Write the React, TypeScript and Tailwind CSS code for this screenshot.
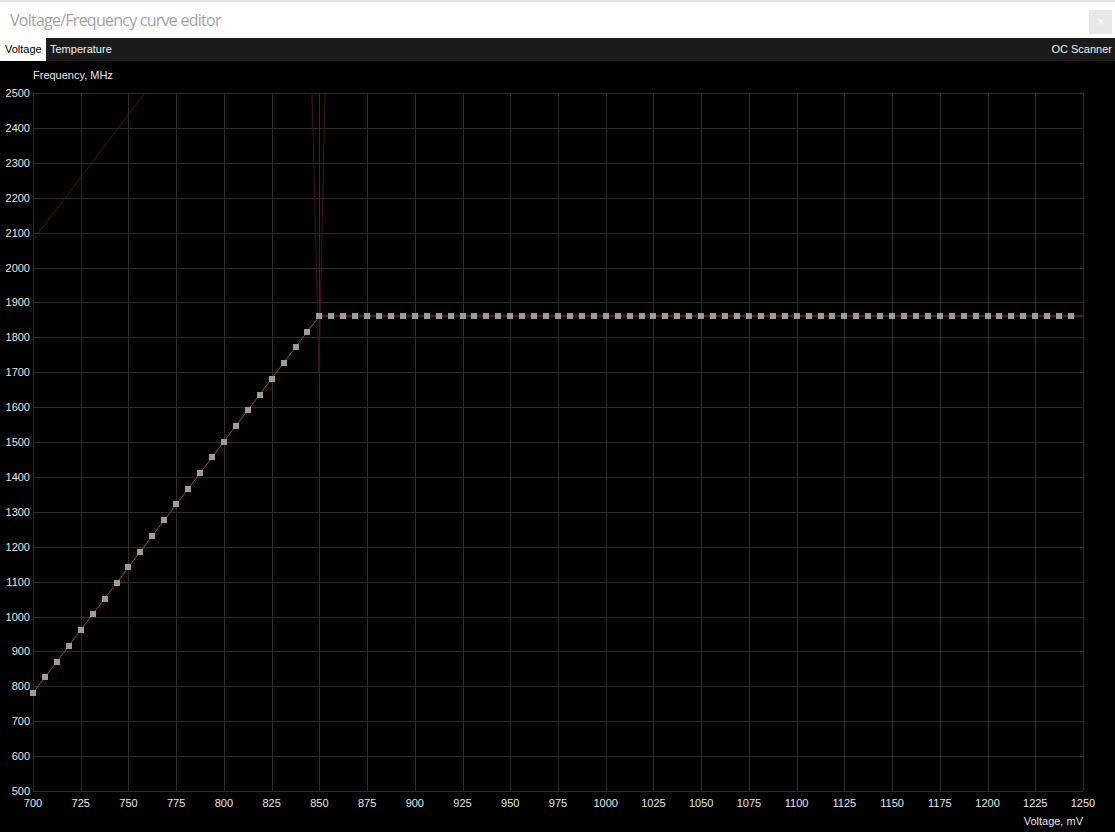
import React from "react";

const X0 = 33;
const X1 = 1083;
const Y0 = 93; // 2500 MHz
const Y1 = 791; // 500 MHz

const vx = (mv: number) => X0 + ((mv - 700) / 550) * (X1 - X0);
const fy = (mhz: number) => Y0 + ((2500 - mhz) / 2000) * (Y1 - Y0);

const X_TICKS = Array.from({ length: 23 }, (_, i) => 700 + i * 25);
const Y_TICKS = Array.from({ length: 21 }, (_, i) => 500 + i * 100);

// curve points: 6.25 mV steps, linear ramp up to 850 mV then flat
const POINTS = Array.from({ length: 88 }, (_, i) => {
  const mv = 700 + i * 6.25;
  const mhz = i <= 24 ? 781 + i * 45 : 1861;
  return { mv, mhz };
});

function Chart() {
  const line = POINTS.map((p) => `${vx(p.mv).toFixed(1)},${fy(p.mhz).toFixed(1)}`).join(" ");
  return (
    <svg width={1115} height={771} viewBox="0 61 1115 771" className="block">
      <rect x={0} y={61} width={1115} height={771} fill="#000" />
      <g stroke="#2c2c2c" strokeWidth={1}>
        {X_TICKS.map((t) => (
          <line key={t} x1={Math.round(vx(t)) + 0.5} x2={Math.round(vx(t)) + 0.5} y1={Y0} y2={Y1} />
        ))}
        {Y_TICKS.map((t) => (
          <line key={t} x1={X0} x2={X1} y1={Math.round(fy(t)) + 0.5} y2={Math.round(fy(t)) + 0.5} />
        ))}
      </g>

      {/* faint ghost curves */}
      <g stroke="#4a1212" strokeWidth={1} fill="none">
        <line x1={33} y1={240} x2={145} y2={93} />
        <line x1={312} y1={93} x2={319} y2={372} />
        <line x1={325} y1={93} x2={319} y2={372} />
      </g>

      <polyline points={`${line} ${X1},${fy(1861).toFixed(1)}`} fill="none" stroke="#a83838" strokeWidth={1} />
      <g fill="#9c9c9c">
        {POINTS.map((p) => (
          <rect key={p.mv} x={Math.round(vx(p.mv)) - 3} y={Math.round(fy(p.mhz)) - 3} width={6} height={6} />
        ))}
      </g>

      <g fill="#e6e6e6" fontFamily="'Liberation Sans', Arial, sans-serif" fontSize={11}>
        <text x={33} y={79}>Frequency, MHz</text>
        {Y_TICKS.map((t) => (
          <text key={t} x={30} y={fy(t) + 4} textAnchor="end">
            {t}
          </text>
        ))}
        {X_TICKS.map((t) => (
          <text key={t} x={vx(t)} y={807} textAnchor="middle">
            {t}
          </text>
        ))}
        <text x={1083} y={825} textAnchor="end">Voltage, mV</text>
      </g>
    </svg>
  );
}

export default function App() {
  return (
    <div className="w-[1115px] h-[832px] overflow-hidden bg-black" style={{ fontFamily: "'Liberation Sans', Arial, sans-serif" }}>
      {/* title bar */}
      <div className="h-[38px] bg-white border-t-2 border-[#e4e4e4] flex items-center justify-between pl-[10px] pr-[3px]">
        <span className="text-[16px] text-[#a3a3a3] font-['Open_Sans',sans-serif] tracking-[-0.75px]">
          Voltage/Frequency curve editor
        </span>
        <div className="w-[23px] h-[24px] mt-[4px] bg-[#e8e8e8] flex items-center justify-center text-[12px] text-white">
          ×
        </div>
      </div>

      {/* tabs */}
      <div className="h-[23px] bg-[#1b1b1b] flex items-center text-[11px]">
        <div className="h-full w-[46px] pl-[5px] bg-white text-black flex items-center">Voltage</div>
        <div className="pl-[4px] text-[#f0f0f0]">Temperature</div>
        <div className="ml-auto pr-[3px] text-[#f0f0f0]">OC Scanner</div>
      </div>

      <Chart />
    </div>
  );
}
